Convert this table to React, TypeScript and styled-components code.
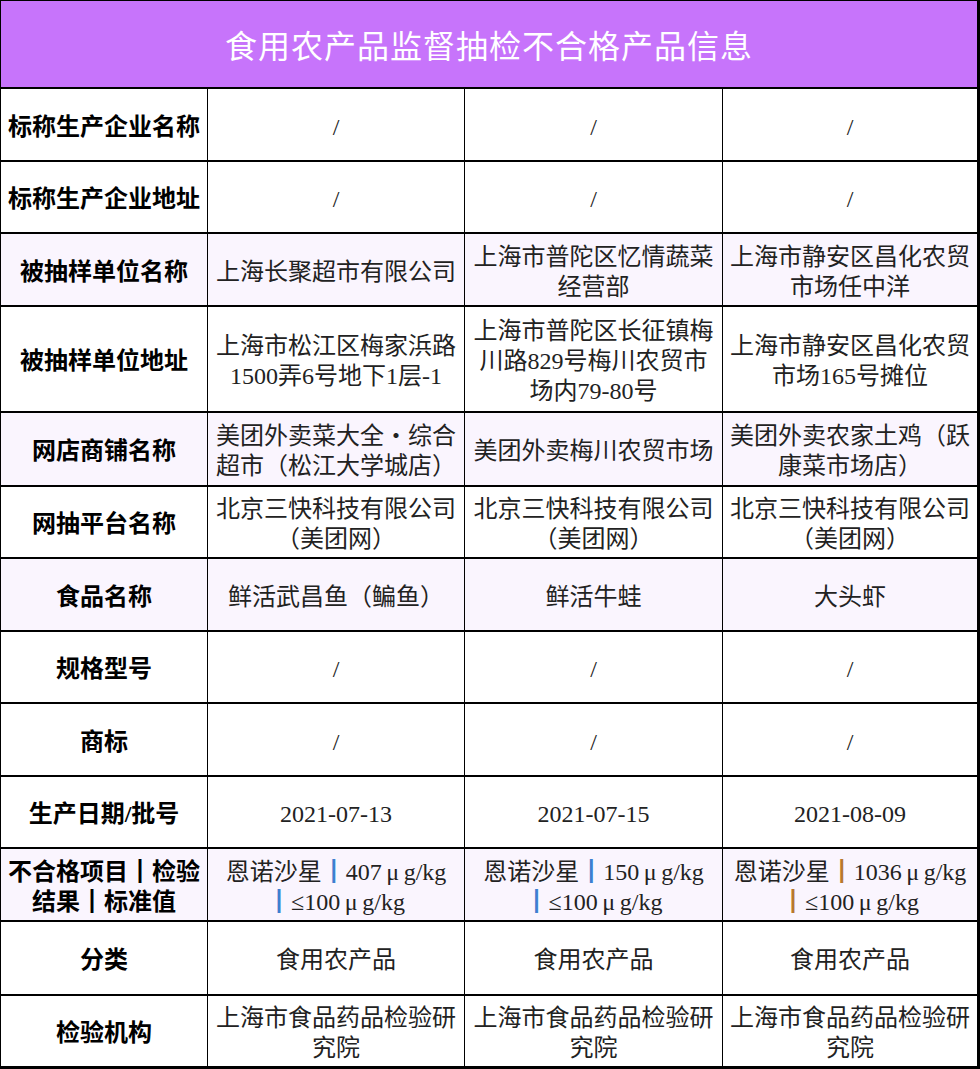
import styled, {createGlobalStyle} from "styled-components";

const GlobalStyle = createGlobalStyle`
  html, body {
    margin: 0;
    padding: 0;
    background: #ffffff;
  }
  body {
    font-family: "Liberation Serif", "Noto Sans CJK SC", serif;
  }
`;

type Cell = string[];

type Row = {
  label: string[];
  height: number;
  shaded?: boolean;
  cells: Cell[];
};

const slash: Cell[] = [["/"], ["/"], ["/"]];

const rows: Row[] = [
  {label: ["标称生产企业名称"], height: 71, cells: slash},
  {label: ["标称生产企业地址"], height: 70, cells: slash},
  {
    label: ["被抽样单位名称"],
    height: 71,
    shaded: true,
    cells: [
      ["上海长聚超市有限公司"],
      ["上海市普陀区忆情蔬菜", "经营部"],
      ["上海市静安区昌化农贸", "市场任中洋"]
    ]
  },
  {
    label: ["被抽样单位地址"],
    height: 104,
    cells: [
      ["上海市松江区梅家浜路", "1500弄6号地下1层-1"],
      ["上海市普陀区长征镇梅", "川路829号梅川农贸市", "场内79-80号"],
      ["上海市静安区昌化农贸", "市场165号摊位"]
    ]
  },
  {
    label: ["网店商铺名称"],
    height: 72,
    shaded: true,
    cells: [
      ["美团外卖菜大全・综合", "超市（松江大学城店）"],
      ["美团外卖梅川农贸市场"],
      ["美团外卖农家土鸡（跃", "康菜市场店）"]
    ]
  },
  {
    label: ["网抽平台名称"],
    height: 70,
    cells: [
      ["北京三快科技有限公司", "（美团网）"],
      ["北京三快科技有限公司", "（美团网）"],
      ["北京三快科技有限公司", "（美团网）"]
    ]
  },
  {
    label: ["食品名称"],
    height: 71,
    shaded: true,
    cells: [["鲜活武昌鱼（鳊鱼）"], ["鲜活牛蛙"], ["大头虾"]]
  },
  {label: ["规格型号"], height: 70, cells: slash},
  {label: ["商标"], height: 71, cells: slash},
  {
    label: ["生产日期/批号"],
    height: 70,
    cells: [["2021-07-13"], ["2021-07-15"], ["2021-08-09"]]
  },
  {
    label: ["不合格项目┃检验", "结果┃标准值"],
    height: 71,
    shaded: true,
    cells: [
      ["恩诺沙星┃407μg/kg", "┃≤100μg/kg"],
      ["恩诺沙星┃150μg/kg", "┃≤100μg/kg"],
      ["恩诺沙星┃1036μg/kg", "┃≤100μg/kg"]
    ]
  },
  {
    label: ["分类"],
    height: 72,
    cells: [["食用农产品"], ["食用农产品"], ["食用农产品"]]
  },
  {
    label: ["检验机构"],
    height: 70,
    cells: [
      ["上海市食品药品检验研", "究院"],
      ["上海市食品药品检验研", "究院"],
      ["上海市食品药品检验研", "究院"]
    ]
  }
];

const barColors = ["#3d7fd0", "#3d7fd0", "#b8782f"];

const Sheet = styled.div`
  width: 976px;
  display: grid;
  grid-template-columns: 206px 256px 257px 254px;
  column-gap: 1px;
  row-gap: 2px;
  background: #000000;
  border-style: solid;
  border-color: #000000;
  border-width: 1px 3px 3px 1px;
`;

const Title = styled.div`
  grid-column: 1 / -1;
  height: 86px;
  background: #c774fb;
  color: #ffffff;
  font-size: 32px;
  letter-spacing: 1px;
  display: flex;
  align-items: center;
  justify-content: center;
`;

const CellBox = styled.div<{$height: number; $shaded?: boolean}>`
  box-sizing: border-box;
  height: ${(p) => p.$height}px;
  padding-top: 4px;
  background: ${(p) => (p.$shaded ? "#faf5fe" : "#ffffff")};
  display: flex;
  flex-direction: column;
  align-items: center;
  justify-content: center;
  text-align: center;
  white-space: nowrap;
`;

const Label = styled(CellBox)`
  font-weight: 700;
  font-size: 24px;
  line-height: 30px;
  color: #000000;
`;

const Value = styled(CellBox)`
  font-size: 24px;
  line-height: 30px;
  color: #222222;
`;

const Bar = styled.span<{$color: string}>`
  color: ${(p) => p.$color};
`;

const LabelBar = styled.span`
  color: #000000;
`;

const Micro = styled.span`
  display: inline-block;
  width: 22px;
  text-align: center;
`;

const renderUnits = (text: string) =>
  text.split("μ").map((part, i) => (
    <span key={i}>
      {i > 0 && <Micro>μ</Micro>}
      {part}
    </span>
  ));

const renderWithBars = (text: string, color?: string) =>
  text.split("┃").map((part, i) => (
    <span key={i}>
      {i > 0 &&
        (color ? <Bar $color={color}>┃</Bar> : <LabelBar>┃</LabelBar>)}
      {renderUnits(part)}
    </span>
  ));

const App = () => (
  <>
    <GlobalStyle />
    <Sheet>
      <Title>食用农产品监督抽检不合格产品信息</Title>
      {rows.map((row, r) => [
        <Label key={`l${r}`} $height={row.height} $shaded={row.shaded}>
          {row.label.map((line, i) => (
            <div key={i}>{renderWithBars(line)}</div>
          ))}
        </Label>,
        ...row.cells.map((cell, c) => (
          <Value key={`v${r}-${c}`} $height={row.height} $shaded={row.shaded}>
            {cell.map((line, i) => (
              <div key={i}>{renderWithBars(line, barColors[c])}</div>
            ))}
          </Value>
        ))
      ])}
    </Sheet>
  </>
);

export default App;
